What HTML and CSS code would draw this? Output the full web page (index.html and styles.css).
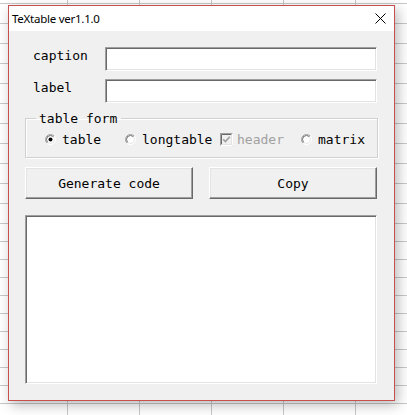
FILE: index.html
```html
<!DOCTYPE html>
<html>
<head>
<meta charset="utf-8">
<link rel="stylesheet" href="styles.css">
</head>
<body>
<svg class="defs" width="0" height="0" aria-hidden="true">
  <defs>
    <linearGradient id="gOuter" x1="0" y1="0" x2="1" y2="1">
      <stop offset="0.45" stop-color="#a0a0a0"/>
      <stop offset="0.55" stop-color="#ffffff"/>
    </linearGradient>
    <linearGradient id="gInner" x1="0" y1="0" x2="1" y2="1">
      <stop offset="0.45" stop-color="#696969"/>
      <stop offset="0.55" stop-color="#e3e3e3"/>
    </linearGradient>
  </defs>
</svg>
<div class="desktop">
  <div class="window">
    <div class="titlebar">
      <span class="title">TeXtable ver1.1.0</span>
      <svg class="close" width="11" height="11" viewBox="0 0 11 11">
        <path d="M0.5 0.5 L10.5 10.5 M10.5 0.5 L0.5 10.5" stroke="#000" stroke-width="1" fill="none"/>
      </svg>
    </div>
    <div class="content">
      <div class="field">
        <span class="lbl">caption</span>
        <div class="input"></div>
      </div>
      <div class="field field-second">
        <span class="lbl">label</span>
        <div class="input"></div>
      </div>
      <fieldset class="frame">
        <legend class="legend">table form</legend>
        <div class="options">
          <span class="opt opt1">
            <svg class="radio" width="12" height="12" viewBox="0 0 12 12">
              <circle cx="5.5" cy="5.5" r="5" fill="#fff" stroke="url(#gOuter)" stroke-width="1"/>
              <circle cx="5.5" cy="5.5" r="4" fill="#fff" stroke="url(#gInner)" stroke-width="1"/>
              <circle cx="5.5" cy="5.5" r="2" fill="#000"/>
            </svg>table</span>
          <span class="opt opt2">
            <svg class="radio" width="12" height="12" viewBox="0 0 12 12">
              <circle cx="5.5" cy="5.5" r="5" fill="#fff" stroke="url(#gOuter)" stroke-width="1"/>
              <circle cx="5.5" cy="5.5" r="4" fill="#fff" stroke="url(#gInner)" stroke-width="1"/>
            </svg>longtable</span>
          <span class="opt opt3 disabled">
            <svg class="check" width="13" height="13" viewBox="0 0 13 13">
              <rect x="0.5" y="0.5" width="12" height="12" fill="#f0f0f0" stroke="#a0a0a0"/>
              <path d="M12.5 0.5 V12.5 H0.5" stroke="#ffffff" fill="none"/>
              <path d="M1.5 11.5 V1.5 H11.5" stroke="#696969" fill="none"/>
              <path d="M11.5 1.5 V11.5 H1.5" stroke="#e3e3e3" fill="none"/>
              <path d="M3.2 6.2 L5.4 8.6 L9.8 3.8" stroke="#a0a0a0" stroke-width="1.7" fill="none"/>
            </svg>header</span>
          <span class="opt opt4">
            <svg class="radio" width="12" height="12" viewBox="0 0 12 12">
              <circle cx="5.5" cy="5.5" r="5" fill="#fff" stroke="url(#gOuter)" stroke-width="1"/>
              <circle cx="5.5" cy="5.5" r="4" fill="#fff" stroke="url(#gInner)" stroke-width="1"/>
            </svg>matrix</span>
        </div>
      </fieldset>
      <div class="buttons">
        <div class="btn">Generate code</div>
        <div class="btn">Copy</div>
      </div>
      <div class="textarea"></div>
    </div>
  </div>
</div>
</body>
</html>
```
FILE: styles.css
```css
html, body {
  margin: 0;
  padding: 0;
  background: #ffffff;
}
.defs {
  position: absolute;
  width: 0;
  height: 0;
}
.desktop {
  position: relative;
  width: 407px;
  height: 415px;
  overflow: hidden;
  background-color: #ffffff;
  background-image:
    repeating-linear-gradient(to right, transparent 0 71px, #c8c8c8 71px 72px),
    repeating-linear-gradient(to bottom, #c8c8c8 0 1px, transparent 1px 20px),
    repeating-linear-gradient(to bottom, #c8c8c8 0 1px, transparent 1px 18px);
  background-position: -4px 0, 0 3px, 0 241px;
  background-size: 100% 100%, 100% 221px, 100% 175px;
  background-repeat: repeat, no-repeat, no-repeat;
}
.window {
  position: absolute;
  left: 8px;
  top: 5px;
  width: 387px;
  height: 396px;
  box-sizing: border-box;
  border: 1px solid #c4514f;
  background: #f0f0f0;
  box-shadow: 3px 4px 12px rgba(0, 0, 0, 0.28);
  display: flex;
  flex-direction: column;
}
.titlebar {
  height: 25px;
  background: #ffffff;
  display: flex;
  align-items: center;
  justify-content: space-between;
  padding: 0 8px 0 3px;
}
.title {
  font-family: "Noto Sans", "Liberation Sans", sans-serif;
  font-size: 11.5px;
  letter-spacing: -0.25px;
  color: #000;
  line-height: 14px;
  padding-top: 1px;
}
.close {
  display: block;
}
.content {
  flex: 1;
  display: flex;
  flex-direction: column;
  padding: 16px 16px 0 16px;
  font-family: "DejaVu Sans Mono", "Liberation Mono", monospace;
  font-size: 13px;
  line-height: 15px;
  color: #000;
}
.field {
  display: flex;
  align-items: flex-start;
}
.field-second {
  margin-top: 8px;
}
.lbl {
  width: 72px;
  margin-left: 8px;
  padding-top: 1px;
}
.input {
  width: 272px;
  height: 24px;
  box-sizing: border-box;
  background: #ffffff;
  border-style: solid;
  border-width: 1px;
  border-color: #a0a0a0 #ffffff #ffffff #a0a0a0;
  box-shadow: inset 1px 1px 0 #696969, inset -1px -1px 0 #e3e3e3;
}
.frame {
  margin: 8px 0 0 0;
  padding: 0 0 10px 0;
  border: 1px solid #d0d0d0;
  box-shadow: 1px 1px 0 #ffffff, inset 1px 1px 0 #ffffff;
  min-width: 0;
}
.legend {
  margin-left: 10px;
  padding: 0 4px 0 3px;
  line-height: 15px;
}
.options {
  display: flex;
  align-items: center;
  padding: 6px 0 0 19px;
  white-space: nowrap;
}
.opt {
  display: flex;
  align-items: center;
}
.opt1 { width: 80px; }
.opt2 { width: 95px; }
.opt3 { width: 81px; }
.radio {
  display: block;
  margin-right: 5px;
}
.check {
  display: block;
  margin-right: 4px;
}
.disabled {
  color: #a0a0a0;
}
.buttons {
  display: flex;
  gap: 16px;
  margin-top: 9px;
}
.btn {
  width: 168px;
  height: 32px;
  box-sizing: border-box;
  display: flex;
  align-items: center;
  justify-content: center;
  background: #f0f0f0;
  border-style: solid;
  border-width: 1px;
  border-color: #ffffff #696969 #696969 #ffffff;
  box-shadow: inset -1px -1px 0 #a0a0a0, inset 1px 1px 0 #e3e3e3;
}
.textarea {
  margin-top: 16px;
  width: 352px;
  height: 169px;
  box-sizing: border-box;
  background: #ffffff;
  border-style: solid;
  border-width: 1px;
  border-color: #a0a0a0 #ffffff #ffffff #a0a0a0;
  box-shadow: inset 1px 1px 0 #696969, inset -1px -1px 0 #e3e3e3;
}
```
